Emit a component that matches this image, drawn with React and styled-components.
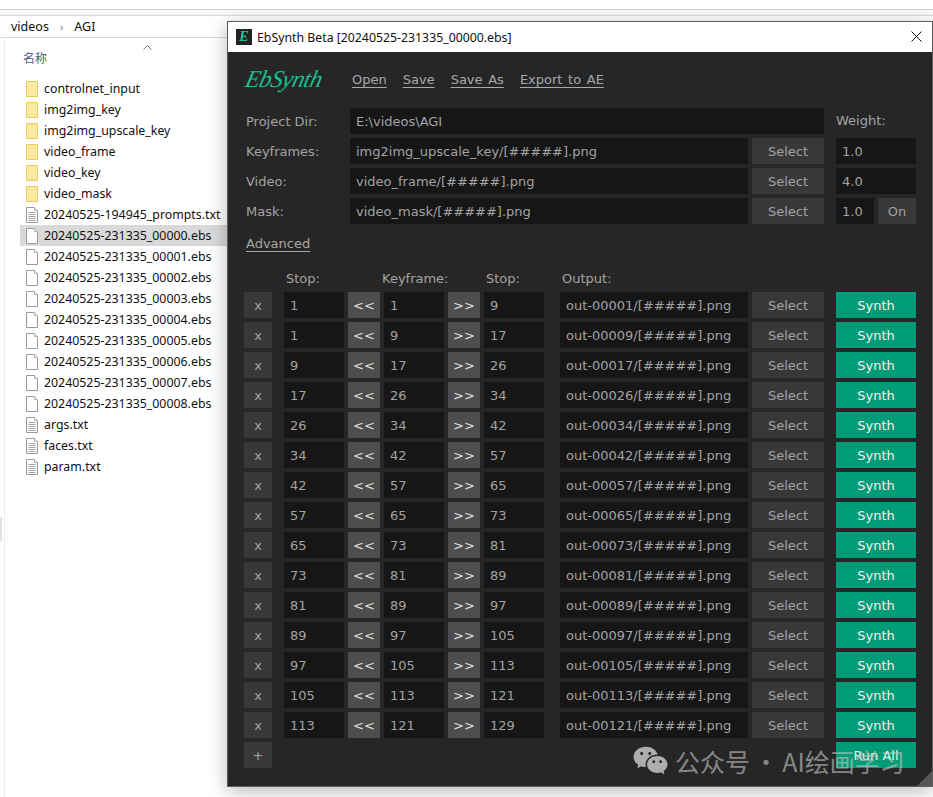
import React from 'react';
import styled, { createGlobalStyle } from 'styled-components';
import { RiWechatFill } from 'react-icons/ri';

const GlobalStyle = createGlobalStyle`
  html, body { margin: 0; padding: 0; background: #fff; }
`;

const Desktop = styled.div`
  position: relative;
  width: 933px;
  height: 797px;
  overflow: hidden;
  background: #fff;
  font-family: "Noto Sans", "Noto Sans CJK SC", sans-serif;
`;

// explorer behind the dialog
const Explorer = styled.div`
  height: 100%;
  border-top: 1px solid #d4d4d4;
  margin-top: 9px;
  background: #fff;
`;
const ToolStrip = styled.div`
  height: 5px;
  background: #f8f8f8;
`;
const Breadcrumb = styled.div`
  height: 21px;
  display: flex;
  align-items: center;
  gap: 11px;
  padding-left: 11px;
  border-top: 1px solid #d9d9d9;
  border-bottom: 1px solid #d9d9d9;
  font-size: 12.5px;
  color: #111;
`;
const Chevron = styled.span`
  color: #888;
  font-size: 11px;
`;
const ListPane = styled.div`
  margin-left: 4px;
  height: 760px;
  border-left: 1px solid #efefef;
  padding-top: 1px;
`;
const ColumnHead = styled.div`
  position: relative;
  height: 39px;
  padding: 10px 0 0 18px;
  box-sizing: border-box;
  font-size: 12px;
  color: #4c607a;
`;
const SortCaret = styled.svg`
  position: absolute;
  left: 138px;
  top: 6px;
`;
const FileRow = styled.div`
  height: 21px;
  display: flex;
  align-items: center;
  gap: 6px;
  margin-left: 15px;
  padding-left: 6px;
  font-size: 12.35px;
  color: #111;
  background: ${p => (p.$selected ? '#d9d9d9' : 'transparent')};
`;
const ScrollNub = styled.div`
  position: absolute;
  left: 0;
  top: 517px;
  width: 2px;
  height: 24px;
  background: #e2e2e2;
`;

// ebsynth dialog, floats over the explorer
const Dialog = styled.div`
  position: absolute;
  left: 227px;
  top: 21px;
  width: 704px;
  height: 764px;
  border: 1px solid #5e5e5e;
  box-shadow: 0 4px 18px rgba(0, 0, 0, 0.28);
  background: #262626;
  font-family: "DejaVu Sans", sans-serif;
  font-size: 13px;
  color: #a3a3a3;
`;
const TitleBar = styled.div`
  height: 30px;
  background: #fff;
  display: flex;
  align-items: center;
  padding-left: 8px;
  color: #111;
  font-family: "Noto Sans", sans-serif;
  font-size: 12.3px;
  position: relative;
`;
const AppIcon = styled.span`
  width: 16px;
  height: 16px;
  background: #222;
  color: #1fc39a;
  font: italic 700 14px/16px "Liberation Serif", serif;
  text-align: center;
  margin-right: 5px;
`;
const CloseIcon = styled.svg`
  position: absolute;
  right: 10px;
  top: 9px;
`;
const Body = styled.div`
  padding: 8px 16px 0 16px;
`;
const MenuBar = styled.div`
  height: 40px;
  display: flex;
  align-items: center;
  padding: 0 0 2px 2px;
  box-sizing: border-box;
`;
const Logo = styled.span`
  width: 106px;
  font: italic 400 24px/40px "Liberation Serif", serif;
  color: #1bbd93;
  letter-spacing: -0.6px;
  transform: skewX(-14deg);
  transform-origin: left center;
`;
const MenuLink = styled.span`
  margin-right: 16px;
  text-decoration: underline;
  text-underline-offset: 3px;
  word-spacing: 1.5px;
  color: #a8a8a8;
`;
const FormRows = styled.div`
  margin-top: 8px;
  display: flex;
  flex-direction: column;
  gap: 4px;
  padding-left: 2px;
`;
const Row = styled.div`
  display: flex;
  align-items: center;
  gap: 4px;
  height: 26px;
`;
const RowLabel = styled.span`
  width: 100px;
`;
const Field = styled.div`
  width: ${p => p.$w}px;
  height: 26px;
  line-height: 28px;
  padding-left: 6px;
  box-sizing: border-box;
  background: #161616;
  color: #a3a3a3;
  margin-left: ${p => p.$ml || 0}px;
  white-space: nowrap;
  overflow: hidden;
`;
const Btn = styled.div`
  width: ${p => p.$w}px;
  height: 26px;
  line-height: 27px;
  text-align: center;
  background: ${p => p.$bg || '#383838'};
  color: ${p => p.$fg || '#a3a3a3'};
  margin-left: ${p => p.$ml || 0}px;
`;
const WeightLabel = styled.span`
  margin-left: 8px;
  padding-bottom: 2px;
`;
const AdvancedLink = styled(MenuLink)`
  display: block;
  margin: 10px 0 0 2px;
  height: 20px;
  line-height: 20px;
`;
const HeadRow = styled.div`
  display: flex;
  height: 20px;
  line-height: 20px;
  margin-top: 15px;
`;
const HeadCell = styled.span`
  width: ${p => p.$w}px;
`;
const Table = styled.div`
  margin-top: 3px;
  display: flex;
  flex-direction: column;
  gap: 4px;
`;
const LastRow = styled(Row)`
  justify-content: space-between;
`;
const ResizeGrip = styled.div`
  position: absolute;
  right: 0;
  bottom: 0;
  width: 0;
  height: 0;
  border-left: 15px solid transparent;
  border-bottom: 15px solid #555;
`;
const Watermark = styled.div`
  position: absolute;
  left: 632px;
  top: 742px;
  display: flex;
  align-items: center;
  gap: 6px;
  color: rgba(198, 198, 198, 0.62);
  font-family: "Noto Sans CJK SC", "Noto Sans", sans-serif;
  font-size: 25px;
  word-spacing: -2px;
  line-height: 36px;
  white-space: nowrap;
`;

const Folder = () => (
  <svg width="12" height="16" viewBox="0 0 12 16">
    <path d="M.5.5h11v15H.5z" fill="#fde9a0" stroke="#ecca5e" />
  </svg>
);
const FileIcon = ({ lines }) => (
  <svg width="12" height="16" viewBox="0 0 12 16">
    <path d="M.5.5h8l3 3v12H.5z" fill="#fff" stroke="#999" />
    <path d="M8.5.5v3h3" fill="#eee" stroke="#b5b5b5" />
    {lines && <path d="M2.5 5.5h7M2.5 7.5h7M2.5 9.5h7M2.5 11.5h7M2.5 13.5h7" stroke="#a3a3a3" />}
  </svg>
);

const files = [
  ['folder', 'controlnet_input'],
  ['folder', 'img2img_key'],
  ['folder', 'img2img_upscale_key'],
  ['folder', 'video_frame'],
  ['folder', 'video_key'],
  ['folder', 'video_mask'],
  ['txt', '20240525-194945_prompts.txt'],
  ['ebs', '20240525-231335_00000.ebs', true],
  ['ebs', '20240525-231335_00001.ebs'],
  ['ebs', '20240525-231335_00002.ebs'],
  ['ebs', '20240525-231335_00003.ebs'],
  ['ebs', '20240525-231335_00004.ebs'],
  ['ebs', '20240525-231335_00005.ebs'],
  ['ebs', '20240525-231335_00006.ebs'],
  ['ebs', '20240525-231335_00007.ebs'],
  ['ebs', '20240525-231335_00008.ebs'],
  ['txt', 'args.txt'],
  ['txt', 'faces.txt'],
  ['txt', 'param.txt'],
];

const sequences = [
  [1, 1, 9], [1, 9, 17], [9, 17, 26], [17, 26, 34], [26, 34, 42],
  [34, 42, 57], [42, 57, 65], [57, 65, 73], [65, 73, 81], [73, 81, 89],
  [81, 89, 97], [89, 97, 105], [97, 105, 113], [105, 113, 121], [113, 121, 129],
];

const GREEN = '#009b77';

export default function App() {
  return (
    <Desktop>
      <GlobalStyle />
      <Explorer>
        <ToolStrip />
        <Breadcrumb>
          <span>videos</span>
          <Chevron>›</Chevron>
          <span>AGI</span>
        </Breadcrumb>
        <ListPane>
          <ColumnHead>
            名称
            <SortCaret width="9" height="5" viewBox="0 0 9 5">
              <path d="M.5 4.5l4-4 4 4" fill="none" stroke="#777" />
            </SortCaret>
          </ColumnHead>
          {files.map(([type, name, selected]) => (
            <FileRow key={name} $selected={selected}>
              {type === 'folder' ? <Folder /> : <FileIcon lines={type === 'txt'} />}
              <span>{name}</span>
            </FileRow>
          ))}
        </ListPane>
      </Explorer>
      <ScrollNub />

      <Dialog>
        <TitleBar>
          <AppIcon>E</AppIcon>
          EbSynth Beta [20240525-231335_00000.ebs]
          <CloseIcon width="11" height="11" viewBox="0 0 11 11">
            <path d="M.5.5l10 10M10.5.5l-10 10" stroke="#111" />
          </CloseIcon>
        </TitleBar>
        <Body>
          <MenuBar>
            <Logo>EbSynth</Logo>
            <MenuLink>Open</MenuLink>
            <MenuLink>Save</MenuLink>
            <MenuLink>Save As</MenuLink>
            <MenuLink>Export to AE</MenuLink>
          </MenuBar>
          <FormRows>
            <Row>
              <RowLabel>Project Dir:</RowLabel>
              <Field $w={474}>E:\videos\AGI</Field>
              <WeightLabel>Weight:</WeightLabel>
            </Row>
            <Row>
              <RowLabel>Keyframes:</RowLabel>
              <Field $w={398}>img2img_upscale_key/[#####].png</Field>
              <Btn $w={72}>Select</Btn>
              <Field $w={80} $ml={8}>1.0</Field>
            </Row>
            <Row>
              <RowLabel>Video:</RowLabel>
              <Field $w={398}>video_frame/[#####].png</Field>
              <Btn $w={72}>Select</Btn>
              <Field $w={80} $ml={8}>4.0</Field>
            </Row>
            <Row>
              <RowLabel>Mask:</RowLabel>
              <Field $w={398}>video_mask/[#####].png</Field>
              <Btn $w={72}>Select</Btn>
              <Field $w={38} $ml={8}>1.0</Field>
              <Btn $w={38}>On</Btn>
            </Row>
          </FormRows>
          <AdvancedLink>Advanced</AdvancedLink>
          <HeadRow>
            <HeadCell $w={42} />
            <HeadCell $w={96}>Stop:</HeadCell>
            <HeadCell $w={104}>Keyframe:</HeadCell>
            <HeadCell $w={76}>Stop:</HeadCell>
            <HeadCell $w={100}>Output:</HeadCell>
          </HeadRow>
          <Table>
            {sequences.map(([from, key, to]) => (
              <Row key={key}>
                <Btn $w={28}>x</Btn>
                <Field $w={60} $ml={8}>{from}</Field>
                <Btn $w={32} $bg="#4d4d4d" $fg="#e0e0e0">{'<<'}</Btn>
                <Field $w={60}>{key}</Field>
                <Btn $w={32} $bg="#4d4d4d" $fg="#e0e0e0">{'>>'}</Btn>
                <Field $w={60}>{to}</Field>
                <Field $w={188} $ml={12}>out-{String(key).padStart(5, '0')}/[#####].png</Field>
                <Btn $w={72}>Select</Btn>
                <Btn $w={80} $ml={8} $bg={GREEN} $fg="#f2f2f2">Synth</Btn>
              </Row>
            ))}
            <LastRow>
              <Btn $w={28}>+</Btn>
              <Btn $w={80} $bg={GREEN} $fg="#f2f2f2">Run All</Btn>
            </LastRow>
          </Table>
        </Body>
        <ResizeGrip />
      </Dialog>

      <Watermark>
        <RiWechatFill size={37} color="rgba(198,198,198,0.85)" />
        <span>公众号 · AI绘画学习</span>
      </Watermark>
    </Desktop>
  );
}
